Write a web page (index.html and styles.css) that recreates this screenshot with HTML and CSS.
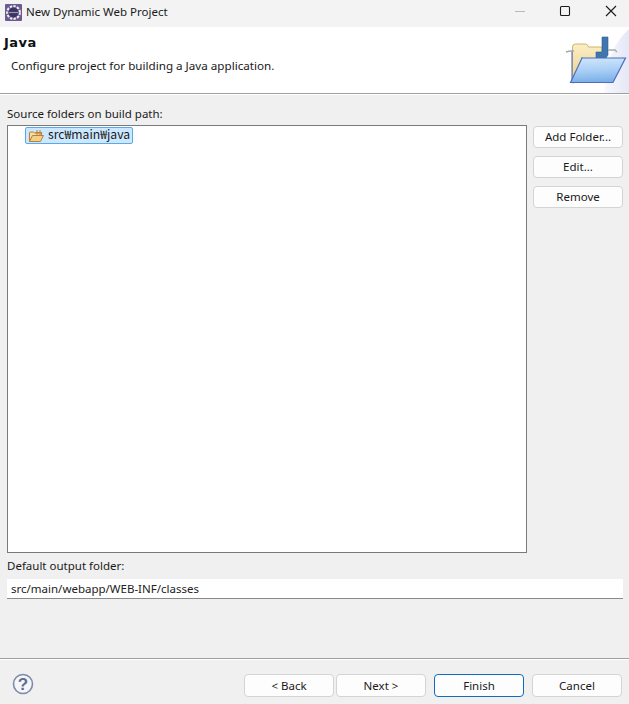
FILE: index.html
```html
<!DOCTYPE html>
<html lang="en">
<head>
<meta charset="utf-8">
<title>New Dynamic Web Project</title>
<link rel="stylesheet" href="styles.css">
</head>
<body>
<div class="dialog">
  <div class="titlebar">
    <svg class="app-icon" width="17" height="17" viewBox="0 0 17 17">
      <rect width="17" height="17" rx="1" fill="#6b5a92"/>
      <circle cx="8.500" cy="8.500" r="6.300" fill="none" stroke="#ecebee" stroke-width="2.200" stroke-dasharray="2.400 1.200"/>
      <circle cx="8.500" cy="8.500" r="5" fill="#3a3560"/>
      <path d="M3.800 8.500h9.400" stroke="#9a96b4" stroke-width="1.200"/>
    </svg>
    <span class="title-text">New Dynamic Web Project</span>
    <div class="window-controls">
      <svg class="win-btn" width="45" height="27" viewBox="0 0 45 27"><path d="M18 11.500h10" stroke="#b8b8b8"/></svg>
      <svg class="win-btn" width="46" height="27" viewBox="0 0 46 27"><rect x="18.500" y="6.500" width="9" height="9" rx="1" fill="none" stroke="#1a1a1a" stroke-width="1.100"/></svg>
      <svg class="win-btn" width="41" height="27" viewBox="0 0 41 27"><path d="M18 6l10 10M28 6L18 16" stroke="#1a1a1a" stroke-width="1.100"/></svg>
    </div>
  </div>
  <header class="banner">
    <div class="banner-text">
      <h1 class="banner-title">Java</h1>
      <p class="banner-desc">Configure project for building a Java application.</p>
    </div>
    <svg class="banner-art" width="69" height="66" viewBox="0 0 69 66">
      <defs>
        <linearGradient id="wash" x1="0" y1="0" x2="1" y2="0"><stop offset="0" stop-color="#f8f9fd"/><stop offset="1" stop-color="#e4e7f6"/></linearGradient>
        <linearGradient id="front" x1="0.400" y1="0" x2="0.500" y2="1"><stop offset="0" stop-color="#cfe5fb"/><stop offset="0.500" stop-color="#a9cff5"/><stop offset="1" stop-color="#78ade8"/></linearGradient>
        <linearGradient id="back" x1="0" y1="0" x2="0" y2="1"><stop offset="0" stop-color="#fbeec6"/><stop offset="1" stop-color="#e9cf88"/></linearGradient>
      </defs>
      <path d="M69 2Q46 22 44 66H69z" fill="url(#wash)"/>
      <path d="M12.500 56V20q0-3 3-3h10q2 0 3 3h13.500v14H30L14 56z" fill="url(#back)" stroke="#cfb26a"/>
      <path d="M12 24v32" stroke="#5f79c4" stroke-width="1.200"/>
      <path d="M42 10h6v18l-2 3H36v-6h6z" fill="#3e76ad" stroke="#2f5f94" stroke-width="0.600"/>
      <path d="M6 25l4-1h4M48 23h7l2 2" stroke="#a9a9a9" stroke-width="1.300" fill="none"/>
      <path d="M21 31h2M62 31l3 1" stroke="#a9a9a9" stroke-width="1.300" fill="none"/>
      <path d="M10.500 55.500L22 31h43.500L53 55.500z" fill="url(#front)" stroke="#4f6cbd" stroke-width="1.200"/>
    </svg>
  </header>
  <main class="content">
    <label class="field-label">Source folders on build path:</label>
    <div class="source-row">
      <div class="tree">
        <div class="tree-item">
          <svg class="folder-icon" width="16" height="14" viewBox="0 0 16 14">
            <path d="M1.500 12.500V4q0-1 1-1h3l1 1h7v2" fill="#f6dca0" stroke="#b9803a"/>
            <path d="M1.500 12.500l3-6h11l-3 6z" fill="#f4cf87" stroke="#b9803a"/>
            <path d="M7.500 3.500h6.500M9 1v5.500M12 1v5.500" stroke="#b9803a"/>
          </svg>
          <span class="tree-label">src₩main₩java</span>
        </div>
      </div>
      <div class="side-buttons">
        <button class="btn">Add Folder...</button>
        <button class="btn">Edit...</button>
        <button class="btn">Remove</button>
      </div>
    </div>
    <label class="field-label output-label">Default output folder:</label>
    <div class="output-field">src/main/webapp/WEB-INF/classes</div>
  </main>
  <footer class="footer">
    <svg class="help-icon" width="22" height="22" viewBox="0 0 22 22">
      <circle cx="11" cy="11" r="9.500" fill="#f4f6fa" stroke="#7d8ba6" stroke-width="1.600"/>
      <text class="help-mark" x="11" y="17" text-anchor="middle">?</text>
    </svg>
    <div class="footer-buttons">
      <div class="nav-pair">
        <button class="btn btn-wide">&lt; Back</button>
        <button class="btn btn-wide">Next &gt;</button>
      </div>
      <button class="btn btn-wide btn-default">Finish</button>
      <button class="btn btn-wide">Cancel</button>
    </div>
  </footer>
</div>
</body>
</html>
```
FILE: styles.css
```css
* { box-sizing: border-box; }
html, body { margin: 0; height: 100%; }
body {
  background: #f0f0f0;
  font-family: "Noto Sans", "Noto Sans CJK KR", sans-serif;
  font-size: 11.5px;
  color: #1a1a1a;
  overflow: hidden;
}
.dialog { display: flex; flex-direction: column; height: 704px; width: 629px; }
.titlebar { height: 27px; flex: none; display: flex; align-items: center; padding-left: 5px; background: #f3f3f3; }
.app-icon { flex: none; margin-top: -3px; }
.title-text { margin-left: 4px; margin-top: -3px; line-height: 16px; }
.window-controls { margin-left: auto; display: flex; }
.win-btn { display: block; }
.banner {
  height: 67px; flex: none; display: flex; justify-content: space-between;
  background: #fff; border-bottom: 1px solid #a0a0a0;
}
.banner-text { padding: 8px 0 0 4px; }
.banner-title { margin: 0; font-size: 13px; letter-spacing: 0.5px; font-weight: 700; line-height: 16px; font-family: "DejaVu Sans", sans-serif; color: #111; }
.banner-desc { margin: 6px 0 0 7px; line-height: 17px; font-size: 11.65px; }
.banner-art { display: block; }
.content { flex: 1; padding: 10px 6px 0 7px; border-top: 1px solid #fff; display: flex; flex-direction: column; }
.field-label { display: block; line-height: 17px; }
.source-row { display: flex; gap: 6px; margin-top: 3px; }
.tree { width: 520px; height: 428px; background: #fff; border: 1px solid #7a7a7a; padding: 1px 0 0 17px; }
.tree-item {
  display: inline-flex; align-items: center; gap: 4px; height: 17px; width: 108px; padding: 0 2px;
  background: #cce8ff; border: 1px solid #5fa8e6; border-radius: 2px; line-height: 15px;
}
.tree-label { font-family: "Noto Sans CJK KR", "Noto Sans", sans-serif; font-size: 12.2px; margin-top: -2px; }
.folder-icon { flex: none; }
.side-buttons { width: 90px; display: flex; flex-direction: column; gap: 8px; margin-top: 1px; }
.btn {
  height: 22px; padding: 0; background: #fdfdfd; border: 1px solid #d4d4d4; border-radius: 4px;
  font: inherit; color: inherit; line-height: 1;
}
.output-label { margin-top: 4px; }
.output-field {
  margin-top: 5px; height: 20px; background: #fff; border-bottom: 1px solid #8a8a8a;
  padding-left: 4px; line-height: 19px; color: #222;
}
.footer {
  height: 46px; flex: none; display: flex; align-items: flex-start; justify-content: space-between;
  border-top: 1px solid #a0a0a0; box-shadow: inset 0 1px 0 #fff; padding: 15px 7px 0 12px;
}
.help-icon { margin-top: -1px; }
.help-mark { font-size: 17px; font-weight: 700; fill: #5f6f8f; font-family: "Liberation Sans", sans-serif; }
.footer-buttons { display: flex; gap: 8px; }
.footer-buttons .btn { height: 23px; }
.nav-pair { display: flex; gap: 2px; }
.btn-wide { width: 90px; }
.btn-default { border-color: #0f6cbd; }
```
